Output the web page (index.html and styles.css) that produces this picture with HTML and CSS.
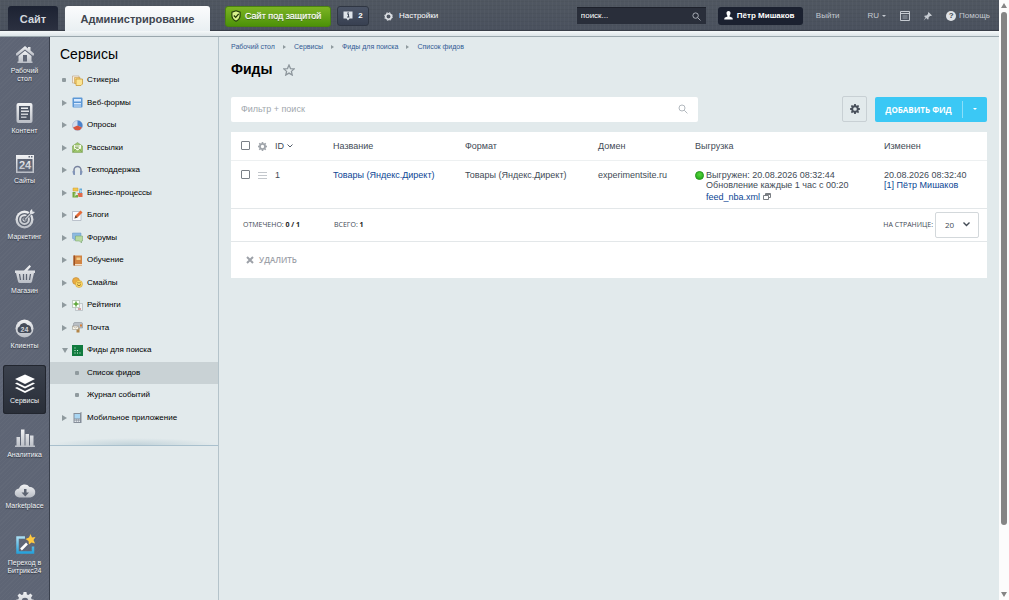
FILE: index.html
```
<!DOCTYPE html>
<html lang="ru">
<head>
<meta charset="utf-8">
<title>Фиды</title>
<link rel="stylesheet" href="styles.css">
</head>
<body>
<svg class="defs" aria-hidden="true">
  <defs>
    <linearGradient id="silver" x1="0" y1="0" x2="0" y2="1"><stop offset="0" stop-color="#f1f2f4"/><stop offset="1" stop-color="#b9bdc5"/></linearGradient>
    <linearGradient id="azure" x1="0" y1="0" x2="0" y2="1"><stop offset="0" stop-color="#a5dcf2"/><stop offset="1" stop-color="#28a4dd"/></linearGradient>
    <symbol id="cog" viewBox="0 0 20 20"><path fill-rule="evenodd" d="M8.4 0h3.2l.5 2.7 1.7.7L16.100 1.800l2.200 2.200-1.600 2.300.7 1.700 2.600.5v3.100l-2.600.5-.7 1.700 1.600 2.300-2.200 2.200-2.300-1.600-1.700.7-.5 2.600H8.400l-.5-2.600-1.700-.7-2.300 1.600-2.200-2.200 1.600-2.300-.7-1.700L0 11.600V8.500L2.600 8l.7-1.700L1.700 4l2.200-2.200 2.300 1.600 1.700-.7zM10 6.300a3.700 3.700 0 1 0 0 7.400a3.700 3.700 0 0 0 0-7.400z"/></symbol>
    <symbol id="lens" viewBox="0 0 10 10"><circle cx="4" cy="4" r="3" fill="none" stroke="currentColor"/><path d="M6.200 6.200 9.400 9.400" stroke="currentColor" fill="none"/></symbol>
  </defs>
</svg>
<div class="window">
<div class="page">
  <header class="topbar">
    <nav class="tabs">
      <a class="tab tab--site" href="#">Сайт</a>
      <a class="tab tab--admin" href="#">Администрирование</a>
    </nav>
    <button class="btn-protect" type="button">
      <svg width="10" height="12" viewBox="0 0 18 22"><path d="M9 1.500 16.500 4v6c0 5-3.500 8.500-7.500 10.500C5 18.500 1.500 15 1.500 10V4z" fill="#d8f28a" stroke="#203c08" stroke-width="2"/><path d="m5 10 3.500 3.500L14 7" fill="none" stroke="#203c08" stroke-width="2.500"/></svg>
      Сайт под защитой
    </button>
    <button class="btn-notify" type="button">
      <svg width="10" height="10" viewBox="0 0 20 20"><path d="M1 1h18v14h-6l-3 4-3-4H1z" fill="#dfe4ea"/><path d="M8 6h3v6m-3 0h5" fill="none" stroke="#3d4656" stroke-width="2"/><path d="M9 2.500h2.500V5H9z" fill="#3d4656"/></svg>
      2
    </button>
    <a class="toplink toplink--settings" href="#"><svg width="9" height="9" viewBox="0 0 20 20"><circle cx="10" cy="10" r="6.200" fill="none" stroke="#e3e6ea" stroke-width="3.500"/><circle cx="10" cy="10" r="8.600" fill="none" stroke="#e3e6ea" stroke-width="2.200" stroke-dasharray="3.600 3.150"/></svg>Настройки</a>
    <div class="topsearch">
      <input type="text" placeholder="поиск..." aria-label="поиск">
      <svg width="9" height="9"><use href="#lens"/></svg>
    </div>
    <a class="user" href="#"><svg width="9" height="9" viewBox="0 0 18 18"><path d="M9 0c3 0 4 2 4 4.500 0 2.500-1.500 4-2 5.500 0 2 1 1.500 5 3 1 .5 1.500 2 1.500 4H.5c0-2 .5-3.500 1.500-4 4-1.500 5-1 5-3-.5-1.500-2-3-2-5.500C5 2 6 0 9 0z" fill="#fff"/></svg>Пётр Мишаков</a>
    <a class="toplink toplink--exit" href="#">Выйти</a>
    <a class="toplink toplink--lang" href="#">RU<span class="caret"></span></a>
    <a class="toplink toplink--panel" href="#" aria-label="Панель"><svg width="10" height="10" viewBox="0 0 20 20"><path d="M1 1h18v18H1zM1 5h18" fill="none" stroke="#c5cad1" stroke-width="2"/><path d="M5 9h10v2H5zm0 4h10v2H5z" fill="#9aa1ab"/></svg></a>
    <a class="toplink toplink--pin" href="#" aria-label="Закрепить"><svg width="9" height="9" viewBox="0 0 18 18"><path d="m11 0 7 7-2 1-2 0-3 3c.5 2 0 3.500-1 4.500l-3.500-3.500L1 17.500l4-6.500L2 8c1-1 3-1.500 5-1l3-3V2z" fill="#c5cad1"/></svg></a>
    <a class="toplink toplink--help" href="#"><span class="q">?</span>Помощь</a>
  </header>
  <div class="strip"></div>
  <div class="body">
    <nav class="rail" aria-label="Разделы">
      <a class="rail-item rail-item--tight" href="#"><svg width="18" height="17" viewBox="0 0 36 34"><path d="M18 0 24 5V2h5v7l7 6v4h-3L18 7 3 19H0v-4z"/><path fill-rule="evenodd" d="M5 20 18 9.500 31 20v11h2v3H3v-3h2zM14 18v13h8V18z"/></svg><span>Рабочий<br>стол</span></a>
      <a class="rail-item rail-item--tight" href="#"><svg width="17" height="20" viewBox="0 0 34 40"><rect x="1" y="0" width="32" height="40" rx="4"/><path d="M6 6h22v28H6z" fill="#4d5564"/><path d="M10 9h14v3H10zm0 6h16v3H10zm0 6h14v3H10zm0 6h11v3H10z"/></svg><span>Контент</span></a>
      <a class="rail-item" href="#"><svg width="18" height="18" viewBox="0 0 36 36"><path fill-rule="evenodd" d="M0 0h36v36H0zM3 8v25h30V8zM25 2v3h3V2zm5 0v3h3V2z"/><text class="n24" x="18" y="28" font-size="22">24</text></svg><span>Сайты</span></a>
      <a class="rail-item" href="#"><svg width="20" height="20" viewBox="0 0 40 40"><circle cx="19" cy="21" r="18"/><circle cx="19" cy="21" r="12" fill="none" stroke="#5c6371" stroke-width="2.500"/><circle cx="19" cy="21" r="5.500" fill="none" stroke="#5c6371" stroke-width="2.500"/><path d="m18 22 16-16" stroke="#5c6371" stroke-width="6"/><path d="m19 20 11-11V4l4-4 1 5 5 1-4 4h-4L21 22z"/></svg><span>Маркетинг</span></a>
      <a class="rail-item" href="#"><svg width="20" height="18" viewBox="0 0 40 36"><path d="m18 11 11-11 3 3-7 8h15v5h-2l-4 17q-1 3-4 3H10q-3 0-4-3L2 16H0v-5z"/><path d="m9 18 2 12m6-12v12m6-12v12m8-12-2 12" stroke="#5c6371" stroke-width="2.500"/></svg><span>Магазин</span></a>
      <a class="rail-item" href="#"><svg width="19" height="19" viewBox="0 0 38 38"><circle cx="19" cy="19" r="18"/><path d="M10 28a7 7 0 0 1-1-13 9 9 0 0 1 16-3 7 7 0 0 1 7 8 5 5 0 0 1-3 8z" fill="#454c5a"/><text class="n24" x="19" y="25" font-size="14">24</text></svg><span>Клиенты</span></a>
      <a class="rail-item rail-item--active" href="#"><svg class="white" width="20" height="19" viewBox="0 0 40 38"><path d="m20 1 20 9-20 10L0 10zM4 17l16 8 16-8 4 2-20 10L0 19zm0 9 16 8 16-8 4 2-20 10L0 28z"/></svg><span>Сервисы</span></a>
      <a class="rail-item" href="#"><svg width="20" height="18" viewBox="0 0 40 36"><path d="M3 16h7v17H3zm9-15h7v32h-7zm9 9h7v23h-7zm9 3h7v20h-7zM0 33h40v3H0z"/></svg><span>Аналитика</span></a>
      <a class="rail-item" href="#"><svg width="20" height="15" viewBox="0 0 40 30"><path d="M9 29a9 9 0 0 1-1-18A12 12 0 0 1 29 8a10 10 0 0 1 2 21z"/><path d="M18 12h5v7h5l-7.500 8L13 19h5z" fill="#5c6371"/></svg><span>Marketplace</span></a>
      <a class="rail-item rail-item--tight" href="#"><svg width="20" height="21" viewBox="0 0 40 42"><path d="M20 7H5v30h31V25" fill="none" stroke="url(#azure)" stroke-width="5"/><path d="m12 31 12-12" stroke="#fff" stroke-width="5"/><path d="m31 0 3 7 7-1-4 6 3 7-7-2-5 4-1-7-6-4 7-3z" fill="#ffc940"/></svg><span>Переход в<br>Битрикс24</span></a>
      <a class="rail-item rail-item--cut" href="#" aria-label="Настройки"><svg width="18" height="18"><use href="#cog"/></svg></a>
    </nav>
    <aside class="sidebar">
      <h2>Сервисы</h2>
      <ul class="menu">
        <li><a href="#"><i class="dot"></i><svg viewBox="0 0 22 22"><path d="M1 2h13v14H1z" fill="#f6efe2" stroke="#b78c62"/><path d="M5 5h11v12H5z" fill="#f6d27c" stroke="#c18e3a"/><path d="M8 8h13v10l-3 3H8z" fill="#fbe493" stroke="#c79532" stroke-width="1.500"/></svg>Стикеры</a></li>
        <li><a href="#"><i class="tri"></i><svg viewBox="0 0 22 22"><rect x="1" y="1" width="20" height="20" rx="2" fill="#5c98d6"/><path d="M4 4h14v5H4zm0 8h14v3H4zm0 5h14v2H4z" fill="#d8eaff"/></svg>Веб-формы</a></li>
        <li><a href="#"><i class="tri"></i><svg viewBox="0 0 22 22"><circle cx="11" cy="11" r="10" fill="#d2dced" stroke="#8ea6c9"/><path d="M11 11V1a10 10 0 0 1 9 14z" fill="#4b82ca"/><path d="m11 11 9 4A10 10 0 0 1 2 15z" fill="#d7553f"/></svg>Опросы</a></li>
        <li><a href="#"><i class="tri"></i><svg viewBox="0 0 22 22"><path d="M1 8 11 1l10 7v13H1z" fill="#9bc46a" stroke="#769b50"/><path d="M4 6h14v7l-7 4-7-4z" fill="#f5faea"/><path d="m2 20 7-7h4l7 7M6 8h9M6 11h7" fill="none" stroke="#7ca254" stroke-width="1.500"/></svg>Рассылки</a></li>
        <li><a href="#"><i class="tri"></i><svg viewBox="0 0 22 22"><path d="M4 16V10a7 7 0 0 1 14 0v6" fill="none" stroke="#78839f" stroke-width="3"/><path d="M1 12h5v8H3q-2-3-2-8zm20 0h-5v8h3q2-3 2-8z" fill="#8295b8"/></svg>Техподдержка</a></li>
        <li><a href="#"><i class="tri"></i><svg viewBox="0 0 22 22"><path d="M2 2h10v6H2z" fill="#f1c84e" stroke="#d29a2d"/><path d="M15 3h5v9h-6z" fill="#63a8d5"/><path d="M1 10h6v6h5v5H1z" fill="#75aa3d"/><path d="M11 12h10v8h-8z" fill="#e06b4a"/><path d="m5 12 4 4-4 4zm10-7 6 3-4 4z" fill="#fff8"/></svg>Бизнес-процессы</a></li>
        <li><a href="#"><i class="tri"></i><svg viewBox="0 0 22 22"><path d="M1 3h17v18H1z" fill="#fafcff" stroke="#aab2bd" stroke-width="1.500"/><path d="m5 17 2-6L17 1l4 4-10 10z" fill="#e46b38"/><path d="m5 17 2-6 4 4z" fill="#5a4538"/></svg>Блоги</a></li>
        <li><a href="#"><i class="tri"></i><svg viewBox="0 0 22 22"><path d="M1 2h17v11H8l-4 4v-4H1z" fill="#8dbae0" stroke="#6797c2"/><path d="M7 8h14v10h-2v4l-4-4H7z" fill="#b8d9a1" stroke="#6f9f67"/></svg>Форумы</a></li>
        <li><a href="#"><i class="tri"></i><svg viewBox="0 0 22 22"><path d="M3 1h17v20H3z" fill="#d18443"/><path d="M3 1h3v20H3z" fill="#9c5225"/><path d="M9 5h8v5H9z" fill="#f2ce8a"/><path d="M6 18h14v2H6z" fill="#f4dfc7"/></svg>Обучение</a></li>
        <li><a href="#"><i class="tri"></i><svg viewBox="0 0 22 22"><circle cx="8" cy="8" r="7" fill="#e9ac43" stroke="#b87c28"/><circle cx="14" cy="14" r="7" fill="#ffdc65" stroke="#c79028"/><path d="M10 15q4 5 8 0M12 10v3m4-3v3" fill="none" stroke="#7c5620" stroke-width="1.500"/></svg>Смайлы</a></li>
        <li><a href="#"><i class="tri"></i><svg viewBox="0 0 22 22"><path d="M7 7h14v14H7z" fill="#eef0f2" stroke="#9ba3a8"/><path d="M1 1h14v14H1z" fill="#fafcf8" stroke="#8fa08a"/><path d="M8 3v10M3 8h10" stroke="#57a331" stroke-width="3"/><path d="M12 18h6" stroke="#b55" stroke-width="2"/></svg>Рейтинги</a></li>
        <li><a href="#"><i class="tri"></i><svg viewBox="0 0 22 22"><path d="M5 1h14q2 0 2 3v8H3V5q0-4 2-4z" fill="#b9bfc5" stroke="#7e858c"/><path d="M9 12h6v9H9z" fill="#b38547"/><path d="M1 8h12v7H1z" fill="#f7f4e9" stroke="#938d80"/><path d="m1 8 6 4 6-4" fill="none" stroke="#938d80"/><path d="M16 5h4v4h-4z" fill="#d98036"/></svg>Почта</a></li>
        <li><a href="#"><i class="tri tri--open"></i><svg viewBox="0 0 22 22"><path d="M0 0h22v22H0z" fill="#107a3e"/><path d="M5 5h2v2H5zm0 5h2v2H5zm0 5h2v2H5zm5-5h2v2h-2zm0 5h2v2h-2zm5 0h2v2h-2z" fill="#d9f4e2"/></svg>Фиды для поиска</a></li>
        <li class="sub current"><a href="#"><i class="dot"></i>Список фидов</a></li>
        <li class="sub"><a href="#"><i class="dot"></i>Журнал событий</a></li>
        <li><a href="#"><i class="tri"></i><svg viewBox="0 0 22 22"><path d="M3 2h14V0h2v22H3z" fill="#858e99"/><path d="M5 4h11v9H5z" fill="#a9d6f3"/><path d="M5 15h3v2H5zm4 0h3v2H9zm4 0h3v2h-3zm-8 3h3v2H5zm4 0h3v2H9zm4 0h3v2h-3z" fill="#dfe4e9"/></svg>Мобильное приложение</a></li>
      </ul>
    </aside>
    <main class="content">
      <nav class="crumbs"><a href="#">Рабочий стол</a><i class="tri"></i><a href="#">Сервисы</a><i class="tri"></i><a href="#">Фиды для поиска</a><i class="tri"></i><a href="#">Список фидов</a></nav>
      <div class="heading"><h1>Фиды</h1><button type="button" aria-label="В избранное"><svg width="12" height="12" viewBox="0 0 24 24"><path d="m12 2 3 7.200 7.500.6-5.700 5 1.700 7.300L12 18.200 5.500 22.100l1.700-7.300-5.700-5L9 9.200z" fill="none" stroke="#8d969c" stroke-width="2.500"/></svg></button></div>
      <div class="toolbar">
        <div class="filter"><input type="text" placeholder="Фильтр + поиск" aria-label="Фильтр + поиск"><svg width="10" height="10"><use href="#lens"/></svg></div>
        <button class="btn-gear" type="button" aria-label="Настроить"><svg width="10" height="10"><use href="#cog"/></svg></button>
        <div class="add"><button class="add-main" type="button">ДОБАВИТЬ ФИД</button><button class="add-more" type="button" aria-label="Ещё"><span class="caret"></span></button></div>
      </div>
      <section class="grid">
        <table>
          <colgroup><col class="c-check"><col class="c-gear"><col class="c-id"><col class="c-name"><col class="c-format"><col class="c-domain"><col class="c-export"><col class="c-date"></colgroup>
          <thead><tr>
            <th><input type="checkbox" aria-label="Выбрать все"></th>
            <th><svg class="cog-gray" width="9" height="9"><use href="#cog"/></svg></th>
            <th>ID <svg width="6" height="4" viewBox="0 0 6 4"><path d="m.5.5 2.500 2.500L5.500.5" fill="none" stroke="#525c69"/></svg></th>
            <th>Название</th><th>Формат</th><th>Домен</th><th>Выгрузка</th><th>Изменен</th>
          </tr></thead>
          <tbody><tr>
            <td><input type="checkbox" aria-label="Выбрать 1"></td>
            <td><svg width="9" height="9" viewBox="0 0 9 9"><path d="M0 2.500h9M0 5.500h9M0 8.500h9" stroke="#c3c7cc"/></svg></td>
            <td>1</td>
            <td><a href="#">Товары (Яндекс.Директ)</a></td>
            <td>Товары (Яндекс.Директ)</td>
            <td>experimentsite.ru</td>
            <td><div class="export"><span class="lamp"></span><div>Выгружен: 20.08.2026 08:32:44<br>Обновление каждые 1 час с 00:20<div class="file"><a href="#">feed_nba.xml</a> <svg width="8" height="7" viewBox="0 0 16 14"><path d="M5 5V1h10v8h-3M1 5h10v8H1zM5 3h9" fill="none" stroke="#6b7076" stroke-width="1.800"/></svg></div></div></div></td>
            <td>20.08.2026 08:32:40<br><a href="#">[1] Пётр Мишаков</a></td>
          </tr></tbody>
        </table>
        <div class="summary">
          <span class="checked">ОТМЕЧЕНО: <b>0 / 1</b></span><span>ВСЕГО: <b>1</b></span>
          <label class="perpage" for="pp">НА СТРАНИЦЕ:</label>
          <div class="select"><select id="pp"><option>20</option></select><svg width="7" height="5" viewBox="0 0 7 5"><path d="m.5.5 3 3 3-3" fill="none" stroke="#434b55" stroke-width="1.400"/></svg></div>
        </div>
        <div class="actions"><button type="button" disabled><svg width="8" height="8" viewBox="0 0 8 8"><path d="m1 1 6 6M7 1 1 7" stroke="#9da1a8" stroke-width="2"/></svg>УДАЛИТЬ</button></div>
      </section>
    </main>
  </div>
</div>
<div class="scroll" aria-hidden="true"><i class="up"></i><div class="track"><div class="thumb"></div></div><i class="down"></i></div>
</div>
</body>
</html>
```

FILE: styles.css
```
* { box-sizing: border-box; }
body { margin: 0; font: 9px/10px "Liberation Sans", Arial, sans-serif; color: #424a55; background: #e2eaec; }
a { color: #0b4594; text-decoration: none; }
button { margin: 0; padding: 0; border: 0; background: none; font: inherit; color: inherit; }
input, select { font: inherit; min-width: 0; }
svg { flex: none; display: block; }
.defs { position: absolute; width: 0; height: 0; }

.window { display: flex; height: 100vh; overflow: hidden; }
.page { flex: 1; min-width: 0; display: flex; flex-direction: column; }

/* Top bar */
.topbar {
  display: flex; align-items: center; flex: none; height: 31px; padding: 0 9px 0 8px;
  color: #e3e6ea; font-size: 8px; font-weight: bold; white-space: nowrap;
  background:
    repeating-linear-gradient(90deg, #ffffff06 0 1px, transparent 1px 4px),
    repeating-linear-gradient(0deg, #0000000a 0 1px, transparent 1px 4px),
    linear-gradient(#505761, #4a515e);
  border-bottom: 1px solid #383e48;
}
.tabs { display: flex; align-self: flex-end; gap: 7px; margin-right: 15px; font-size: 11px; }
.tab { height: 24px; line-height: 26px; text-align: center; border-radius: 3px 3px 0 0; }
.tab--site { width: 50px; color: #d3d8de; background: linear-gradient(#1c2232, #2b3040); }
.tab--admin { width: 145px; color: #3f4650; background: linear-gradient(#fbfcfd, #e9eff2); margin-bottom: -1px; height: 25px; }
.btn-protect {
  display: flex; align-items: center; gap: 4px; height: 21px; width: 106px; padding-left: 5px; margin-right: 6px;
  font-size: 9px; font-weight: normal; color: #fff; border-radius: 3px; border: 1px solid #4a8310; text-shadow: 0 1px 0 #3b6a10, 0 0 1px #fff;
  background: linear-gradient(#7cb423, #4c9208); margin-top: 2px;
}
.btn-notify {
  display: flex; align-items: center; justify-content: center; gap: 5px; width: 32px; height: 20px; margin-top: 2px; margin-right: 15px;
  border: 1px solid #2f3643; border-radius: 3px; background: linear-gradient(#4b5466, #384051); color: #fff;
}
.toplink { display: flex; align-items: center; color: #c5cad1; font-weight: normal; height: 16px; margin-top: 2px; }
.toplink--settings { gap: 6px; color: #fff; }
.topsearch { display: flex; align-items: center; width: 129px; height: 17px; margin: 1px 12px 0 auto; padding: 0 5px 0 4px; background: #292e3a; border-top: 1px solid #1d212b; color: #b5bac3; }
.topsearch input { flex: 1; border: 0; padding: 0; background: none; color: #fff; outline: 0; font-weight: normal; }
.topsearch input::placeholder { color: #fff; opacity: 1; }
.user { display: flex; align-items: center; gap: 4px; width: 85px; height: 18px; margin-top: 1px; padding-left: 6px; border-radius: 3px; background: #1b2130; color: #fff; }
.toplink--exit { margin-left: 13px; }
.toplink--lang { margin-left: 28px; gap: 3px; }
.toplink--panel { margin-left: 14px; }
.toplink--pin { margin-left: 13px; }
.toplink--help { margin-left: 14px; gap: 3px; }
.caret { display: block; border: 2px solid transparent; border-top-color: currentColor; border-bottom: 0; }
.q { width: 10px; height: 10px; border-radius: 5px; background: #e0e3e7; color: #3f4650; font-weight: bold; text-align: center; }
.strip { flex: none; height: 6px; background: linear-gradient(#f4f8f9, #dde5e8); border-bottom: 1px solid #9aa7ad; }

.body { flex: 1; min-height: 0; display: flex; }

/* Section rail */
.rail {
  flex: none; width: 50px; display: flex; flex-direction: column; gap: 6px; padding: 0 3px; overflow: hidden;
  border-right: 1px solid #3a404d;
  background: repeating-linear-gradient(135deg, #ffffff06 0 1px, transparent 1px 3px), #5e6575;
}
.rail-item { flex: none; display: flex; flex-direction: column; align-items: center; gap: 4px; padding: 9px 0; color: #f2f4f6; font-size: 7px; line-height: 8px; text-align: center; white-space: nowrap; border-radius: 3px; text-shadow: 0 1px 1px #2c323d; }
.rail-item span { margin: 0 -3px; }
.rail-item svg { fill: url(#silver); overflow: visible; }
.rail-item .white { fill: #fff; }
.rail-item--tight { padding-bottom: 5px; }
.rail-item--cut { padding-top: 6px; }
.rail-item--active { background: linear-gradient(#3b414d, #292e38); box-shadow: inset 0 0 0 1px #22262f; }
.n24 { font-family: "Liberation Sans", Arial, sans-serif; font-weight: bold; text-anchor: middle; text-shadow: none; }

/* Sidebar */
.sidebar { flex: none; width: 169px; border-right: 1px solid #b4c3ca; color: #000; }
.sidebar h2 { margin: 0; padding: 8px 10px 6px; font-size: 14px; line-height: 18px; font-weight: normal; }
.menu {
  list-style: none; margin: 0; padding: 0 0 16px; display: grid; grid-auto-rows: 1fr; min-height: 377px;
  border-bottom: 1px solid #a9c0cd; font-size: 8px;
  background: radial-gradient(ellipse at bottom, #c2d3da, transparent 70%) bottom / 100% 7px no-repeat;
}
.menu li { display: flex; }
.menu a { flex: 1; display: flex; align-items: center; color: #000; padding-left: 12px; white-space: nowrap; }
.menu svg { width: 11px; height: 11px; margin: 0 4px 0 5px; }
.dot { flex: none; width: 4px; height: 4px; margin-right: 1px; background: #8f9a9e; border-radius: 1px; }
.tri { flex: none; border: 3px solid transparent; border-left: 5px solid #8f9a9e; border-right: 0; }
.tri--open { border: 3px solid transparent; border-top: 5px solid #8f9a9e; border-bottom: 0; margin-right: -1px; }
.sub a { padding-left: 25px; }
.sub .dot { margin-right: 8px; }
.current { background: #c9d2d5; }

/* Content */
.content { flex: 1; min-width: 0; padding: 5px 12px 12px; }
.crumbs { display: flex; align-items: center; gap: 8px; font-size: 7px; }
.crumbs a { color: #315a94; }
.crumbs .tri { border-width: 2px 0 2px 3px; }
.heading { display: flex; align-items: center; gap: 11px; margin: 8px 0 17px; height: 19px; }
.heading h1 { margin: 0; font-size: 14px; line-height: 19px; color: #000; }
.toolbar { display: flex; align-items: center; height: 26px; margin-bottom: 10px; }
.filter { flex: 0 1 467px; display: flex; align-items: center; height: 25px; padding: 0 10px; background: #fff; border-radius: 2px; color: #b3b9bf; }
.filter input { flex: 1; border: 0; padding: 0; background: none; outline: 0; color: #424a55; }
.filter input::placeholder { color: #a1a7ad; opacity: 1; }
.btn-gear { display: flex; align-items: center; justify-content: center; width: 25px; height: 26px; margin: 0 8px 0 auto; border: 1px solid #c8d0d4; border-radius: 2px; fill: #48505b; }
.add { display: flex; align-items: center; width: 112px; height: 25px; border-radius: 2px; background: #3bc8f5; color: #fff; }
.add-main { flex: 1; font: bold 8px/17px "Open Sans", sans-serif; border-right: 1px solid #8adef9; }
.add-more { width: 24px; height: 17px; display: flex; align-items: center; justify-content: center; }

.grid { background: #fff; }
table { width: 100%; table-layout: fixed; border-collapse: collapse; }
.c-check { width: 23px; } .c-gear { width: 17px; } .c-id { width: 58px; } .c-name { width: 132px; }
.c-format { width: 133px; } .c-domain { width: 97px; } .c-export { width: 189px; } .c-date { width: 107px; }
th, td { padding: 0 0 0 4px; text-align: left; font-weight: normal; white-space: nowrap; border-bottom: 1px solid #edf0f1; }
th:first-child, td:first-child { padding-left: 10px; }
th { height: 28px; }
td { height: 48px; padding-top: 9px; vertical-align: top; border-color: #e3e7e9; }
th svg { display: inline-block; vertical-align: middle; }
.cog-gray { fill: #a0a5ab; }
input[type="checkbox"] { display: block; appearance: none; width: 9px; height: 9px; margin: 0; border: 1px solid #7b8087; border-radius: 1px; background: #fff; }
.export { display: flex; gap: 2px; }
.lamp { flex: none; width: 9px; height: 9px; margin-top: 1px; border-radius: 5px; background: radial-gradient(circle at 50% 35%, #56d63c, #1ba414); border: 1px solid #2c9a22; }
.file { display: flex; align-items: center; gap: 3px; padding-top: 2px; }

.summary { display: flex; align-items: center; height: 33px; padding: 0 8px 0 12px; border-bottom: 1px solid #e3e7e9; font: 7px/10px "Open Sans", sans-serif; color: #424a55; }
.summary b { color: #222; }
.checked { width: 91px; }
.perpage { margin-left: auto; margin-right: 2px; }
.select { display: flex; align-items: center; width: 44px; height: 26px; border: 1px solid #d3d8db; border-radius: 2px; padding: 0 8px 0 9px; }
.select select { flex: 1; appearance: none; border: 0; padding: 0; background: none; color: #424a55; font-size: 8px; }
.actions { height: 36px; display: flex; align-items: center; padding-left: 15px; }
.actions button { display: flex; align-items: center; gap: 5px; font: 600 8px/10px "Open Sans", sans-serif; color: #9da1a8; }

/* Page scrollbar */
.scroll { flex: none; width: 10px; display: flex; flex-direction: column; align-items: center; padding: 3px 0; gap: 4px; background: #fcfcfc; }
.up { border: 3px solid transparent; border-bottom: 5px solid #858585; border-top: 0; }
.down { border: 3px solid transparent; border-top: 5px solid #858585; border-bottom: 0; }
.track { flex: 1; width: 6px; }
.thumb { height: 89%; border-radius: 3px; background: #858585; }
```
